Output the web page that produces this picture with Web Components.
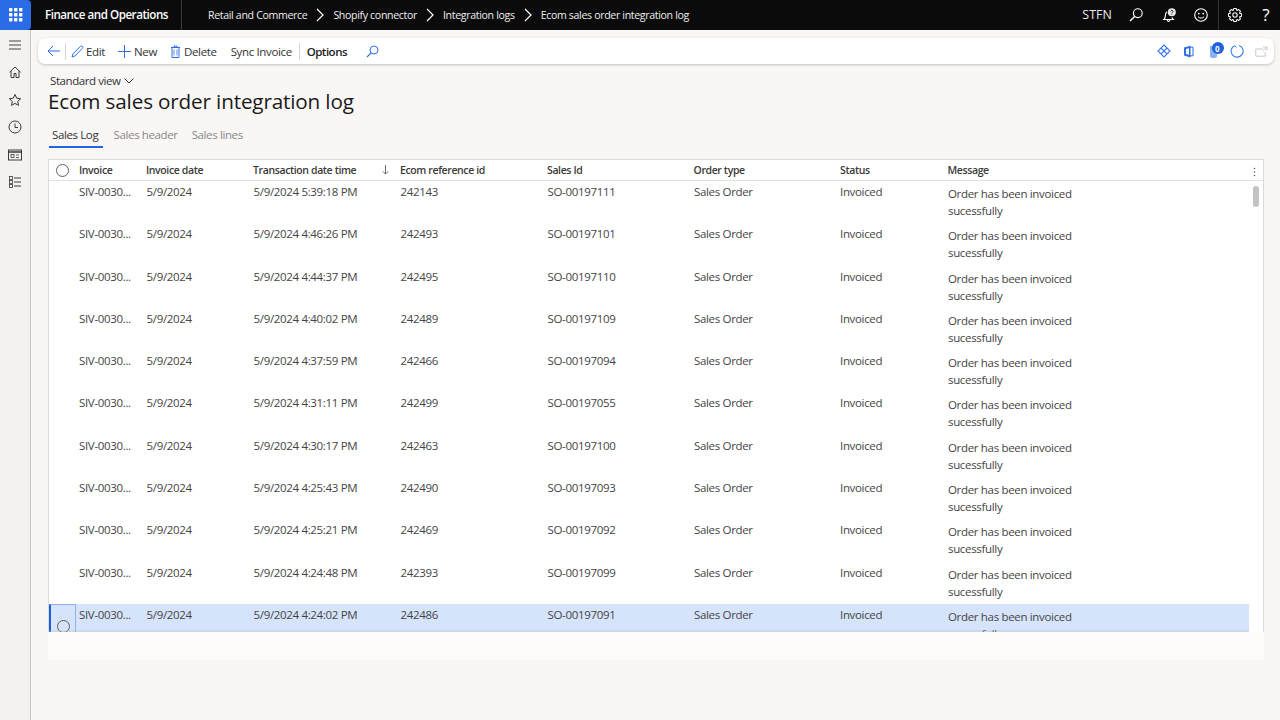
<!DOCTYPE html>
<html lang="en"><head><meta charset="utf-8"><title>Ecom sales order integration log</title>
<style>
html,body{margin:0;height:100%;overflow:hidden;background:#f8f7f5;font-family:"Open Sans","Noto Sans",sans-serif;}
body{display:flex;flex-direction:column;width:1280px;height:720px}
</style></head><body>
<fo-topbar></fo-topbar>
<fo-shell>
  <fo-rail slot="rail"></fo-rail>
  <fo-actions></fo-actions>
  <fo-heading view="Standard view" title-text="Ecom sales order integration log"></fo-heading>
  <fo-tabs></fo-tabs>
  <fo-grid></fo-grid>
</fo-shell>
<script>
const FONT='"Open Sans","Noto Sans",sans-serif';
function el(name,html){customElements.define(name,class extends HTMLElement{connectedCallback(){if(!this.shadowRoot){this.attachShadow({mode:'open'}).innerHTML=typeof html==='function'?html(this):html}}})}
const B='#2f6fe4';
const ic=(w,h,body,extra='')=>`<svg width="${w}" height="${h}" viewBox="0 0 ${w} ${h}" fill="none" ${extra}>${body}</svg>`;
function gear(c,ro,ri,n){let d='';for(let i=0;i<n;i++){const t=i/n*2*Math.PI,s=Math.PI/n;const p=(r,a)=>(c+r*Math.cos(a)).toFixed(2)+' '+(c+r*Math.sin(a)).toFixed(2);d+=(i?'L':'M')+p(ri,t-s*.95)+'L'+p(ro,t-s*.45)+'L'+p(ro,t+s*.45)+'L'+p(ri,t+s*.95)}return d+'z'}
const chev=ic(8,14,'<path d="M1 1l6 6-6 6" stroke="#fff" stroke-width="1.2"/>');

el('fo-topbar',`<style>
:host{display:flex;align-items:center;height:30px;background:#0b0b0b;color:#fff;flex:none;font:12px/30px ${FONT};overflow:hidden}
.w{width:31px;height:30px;background:#2a6be6;border-radius:0 4px 4px 0;display:grid;place-items:center;flex:none}
.p{font-size:11.6px;font-weight:600;margin-left:14px;width:136px;letter-spacing:-.47px;flex:none;white-space:nowrap}
.sep{width:1px;height:30px;background:#3b3b3b;flex:none}
nav{display:flex;align-items:center;margin-left:26px;font-size:10.6px;letter-spacing:-.34px;color:#eee;white-space:nowrap}
nav svg{margin:0 9px 0 9px}
.r{margin-left:auto;display:flex;align-items:center;height:30px}
.u{font-size:12.4px;letter-spacing:.1px;color:#e8e8e8;margin-right:17px}
.r svg{flex:none}
.d{width:1px;height:30px;background:#333;margin:0 9px 0 10px}
.q{font-size:17px;width:14px;margin:0 7px 0 17px;text-align:center}
</style>
<div class="w">${ic(14,14,[0,5,10].flatMap(x=>[0,5,10].map(y=>`<rect x="${x}" y="${y}" width="3.4" height="3.4" rx=".6" fill="#fff"/>`)).join(''))}</div>
<div class="p">Finance and Operations</div><div class="sep"></div>
<nav><span>Retail and Commerce</span>${chev}<span>Shopify connector</span>${chev}<span>Integration logs</span>${chev}<span>Ecom sales order integration log</span></nav>
<div class="r"><span class="u">STFN</span>
${ic(14,14,'<circle cx="8.8" cy="5.2" r="4.4" stroke="#fff" stroke-width="1.1"/><path d="M5.6 8.4L1 13" stroke="#fff" stroke-width="1.4"/>','style="margin-right:19px"')}
${ic(15,15,'<path d="M5 3.8C3.7 4.6 3.4 6 3.4 7.6c0 1.9-.7 3-1.6 3.9h9.4c-.6-.6-1-1.3-1.2-2.1M5.2 12.2c.3 1.5 2.3 1.5 2.7 0" stroke="#fff" stroke-width="1.1"/><circle cx="9.8" cy="4.2" r="4" fill="#e8e8e8"/><path d="M8.6 3.4c.2-1.4 2.4-1.4 2.4 0 0 1-1.2 1-1.2 2M9.8 6.2v.7" stroke="#111" stroke-width=".9"/>','style="margin-right:17px"')}
${ic(14,14,'<circle cx="7" cy="7" r="6.3" stroke="#fff" stroke-width="1.1"/><circle cx="4.8" cy="5.6" r=".9" fill="#fff"/><circle cx="9.2" cy="5.6" r=".9" fill="#fff"/><path d="M4 8.7c1.3 1.8 4.7 1.8 6 0" stroke="#fff" stroke-width="1"/>')}
<div class="d"></div>
${ic(14,14,'<path d="'+gear(7,6.6,5,8)+'" stroke="#fff" stroke-width="1.05" stroke-linejoin="round"/><circle cx="7" cy="7" r="2.2" stroke="#fff" stroke-width="1.05"/>')}
<span class="q">?</span></div>`);

customElements.define('fo-shell',class extends HTMLElement{constructor(){super();this.attachShadow({mode:'open'}).innerHTML=`<style>
:host{display:flex;flex:1;min-height:0}
main{flex:1;min-width:0;display:flex;flex-direction:column;padding:8px 6px 0 7px}
</style><slot name="rail"></slot><main><slot></slot></main>`}});

el('fo-rail',`<style>
:host{display:flex;flex-direction:column;align-items:center;width:30px;flex:none;background:#f3f2f1;border-right:1px solid #c8c6c4;padding-top:8px;box-sizing:content-box;gap:13.6px}
svg{display:block;flex:none}
svg:nth-of-type(2){margin-top:-.6px}
</style>
${ic(14,14,'<path d="M1 3h12M1 7h12M1 11h12" stroke="#444" stroke-width="1"/>')}
${ic(14,14,'<path d="M1.5 7.2L7 2l5.5 5.2M3 6v6.5h3v-4h2v4h3V6" stroke="#3b3a39" stroke-width="1"/>')}
${ic(14,14,'<path d="M7 1.5l1.7 3.7 4 .5-3 2.7.8 4L7 10.4l-3.5 2 .8-4-3-2.7 4-.5z" stroke="#3b3a39" stroke-width="1"/>')}
${ic(14,14,'<circle cx="7" cy="7" r="6" stroke="#3b3a39" stroke-width="1"/><path d="M7 3.5V7.5h3" stroke="#3b3a39" stroke-width="1"/>')}
${ic(14,14,'<rect x=".5" y="2" width="13" height="10" stroke="#3b3a39"/><path d="M1 4h12" stroke="#3b3a39" stroke-width="1.5"/><rect x="3" y="6.5" width="3" height="3" stroke="#3b3a39" stroke-width=".8"/><path d="M8 7h3M8 9.5h3" stroke="#3b3a39" stroke-width=".8"/>')}
${ic(14,14,'<rect x="1.5" y="1.5" width="3" height="3" stroke="#3b3a39" stroke-width=".8"/><rect x="1.5" y="5.5" width="3" height="3" stroke="#3b3a39" stroke-width=".8"/><rect x="1.5" y="9.5" width="3" height="3" stroke="#3b3a39" stroke-width=".8"/><path d="M6 3h7M6 7h7M6 11h7" stroke="#3b3a39"/>')}`);

el('fo-actions',`<style>
:host{display:flex;align-items:center;height:26px;background:#fff;border-radius:7px;box-shadow:0 1px 3px rgba(0,0,0,.22);padding:0 6px 0 9px;font:11.5px/24px ${FONT};color:#333;letter-spacing:-.35px;white-space:nowrap;flex:none}
svg{flex:none;display:block}
.d{width:1px;height:17px;background:#d8d6d4;flex:none}
.a{display:flex;align-items:center}
.l{padding-top:2px}
.o{font-weight:600;color:#222;letter-spacing:-.5px}
.s{flex:1}
.bg{position:relative;display:block;width:15px;height:16px;margin-right:6px;top:-1px}
.bg b{position:absolute;left:6px;top:1.5px;font:700 8px/9px ${FONT};color:#fff;letter-spacing:0}
</style>
${ic(13,12,'<path d="M6 1L1 6l5 5M1 6h12" stroke="'+B+'" stroke-width="1"/>')}
<div class="d" style="margin:0 5px"></div>
<div class="a" style="margin-right:13px">${ic(13,13,'<path d="M1 12l.8-3L9.5 1.3c.6-.6 1.5-.5 2 0s.6 1.4 0 2L3.9 11z" stroke="'+B+'"/>','style="margin-right:2px"')}<span class="l">Edit</span></div>
<div class="a" style="margin-right:13px">${ic(13,13,'<path d="M6.5 0v13M0 6.5h13" stroke="'+B+'"/>','style="margin-right:3px"')}<span class="l">New</span></div>
<div class="a" style="margin-right:14px">${ic(11,13,'<path d="M1 2.5h9M4 2.5V1h3v1.5M2 2.5v10h7v-10" stroke="'+B+'"/><path d="M4 4.5v6M7 4.5v6" stroke="'+B+'" stroke-width=".8"/>','style="margin-right:3px"')}<span class="l">Delete</span></div>
<div class="l" style="width:68px">Sync Invoice</div>
<div class="d" style="margin-right:7px"></div>
<div class="o l" style="width:59px">Options</div>
${ic(13,13,'<circle cx="8" cy="5" r="4" stroke="'+B+'"/><path d="M5 8l-4 4" stroke="'+B+'" stroke-width="1.1"/>')}
<div class="s"></div>
${ic(14,14,'<path d="M7 1l6 6-6 6-6-6z" stroke="#3a78e8" stroke-width="1.1"/><path d="M4 4l6 6M10 4l-6 6" stroke="#3a78e8" stroke-width="1.1"/>','style="margin-right:12px"')}
${ic(11,13,'<path d="M7.5.8L1 2.5v8l6.5 2z" fill="#2f6fe4"/><path d="M7 2.2h3v8.6H7" stroke="#2f6fe4"/><path d="M3 4v5l3 .8V3.3z" fill="#fff"/>','style="margin-right:15px"')}
<span class="bg">${ic(15,16,'<path d="M1 4h7v10c0 1-1 2-2 2H3c-1 0-2-1-2-2z" fill="#8fb2ef"/><circle cx="9" cy="6" r="6" fill="#1f62dc"/>')}<b>0</b></span>
${ic(14,14,'<path d="M4.5 1.7A6 6 0 1 0 9 1.4" stroke="#3a78e8" stroke-width="1.1"/><path d="M4.5 1.7l2 1.6" stroke="#3a78e8" stroke-width="1"/>','style="margin-right:11px"')}
${ic(13,11,'<path d="M8 3H.8v7.2h9.4V6M8 1h4v4M12 1L8 5" stroke="#c9c8c6"/>')}`);

customElements.define('fo-heading',class extends HTMLElement{connectedCallback(){const s=this.attachShadow({mode:'open'});s.innerHTML=`<style>
:host{display:block;padding:9px 0 0 10px;flex:none;color:#242424}
.v{font:11.5px/15px ${FONT};letter-spacing:-.43px;margin-left:2px;display:flex;align-items:center;gap:4px;color:#333}
h1{margin:0;font:500 20.7px/27px ${FONT};letter-spacing:-.16px;color:#1a1a1a;white-space:nowrap}
</style><div class="v"><span>${this.getAttribute('view')}</span>${ic(10,6,'<path d="M.5.5L5 5 9.5.5" stroke="#333"/>')}</div><h1>${this.getAttribute('title-text')}</h1>`}});

el('fo-tabs',`<style>
:host{display:flex;gap:8px;margin:10px 0 0 11px;font:11.5px/16px ${FONT};letter-spacing:-.38px;color:#8a8886;flex:none;height:25px}
span{padding:2px 3px 0 3px;height:21px;box-sizing:content-box}
.on{color:#333;border-bottom:2px solid #2266e3;box-sizing:border-box;height:23px;padding-right:5px;margin-right:-.7px}
</style><span class="on">Sales Log</span><span>Sales header</span><span>Sales lines</span>`);

const COLS='27px 3px 67px 107px 129px 18px 147px 146.5px 146.5px 107.5px 1fr';
el('fo-head',`<style>
:host{display:grid;grid-template-columns:${COLS};height:21px;box-sizing:border-box;align-items:center;border-bottom:1px solid #e1dfdd;font:600 10.5px/20px ${FONT};letter-spacing:-.38px;color:#3b3a39;white-space:nowrap}
i{width:11px;height:11px;border:1px solid #605e5c;border-radius:50%;margin-left:7px;display:block}
svg{display:block}
.m{position:absolute;right:7px;top:7px}
</style><i></i><span></span><span>Invoice</span><span>Invoice date</span><span>Transaction date time</span>
${ic(7,10,'<path d="M3.5 0v9M.8 6.3L3.5 9l2.7-2.7" stroke="#605e5c" stroke-width=".9"/>')}
<span>Ecom reference id</span><span>Sales Id</span><span>Order type</span><span>Status</span><span>Message</span>
${ic(3,10,'<circle cx="1.5" cy="1.5" r=".8" fill="#605e5c"/><circle cx="1.5" cy="5" r=".8" fill="#605e5c"/><circle cx="1.5" cy="8.5" r=".8" fill="#605e5c"/>','class="m"')}`);

customElements.define('fo-row',class extends HTMLElement{connectedCallback(){const a=n=>this.getAttribute(n);const sel=this.hasAttribute('selected');this.attachShadow({mode:'open'}).innerHTML=`<style>
:host{display:grid;grid-template-columns:${COLS};grid-template-rows:42.3px;height:42.3px;font:11.5px/17px ${FONT};letter-spacing:-.33px;color:#444;${sel?'background:#d6e4fb;':''}white-space:nowrap;position:relative}
span{padding-top:2px;grid-row:1}
.x{padding-left:.5px}
.msg{grid-column:11;padding-top:4px;white-space:normal;width:135px;padding-left:.5px}
.sel{display:${sel?'block':'none'};grid-column:1;grid-row:1;width:27px;height:28px;box-sizing:border-box;border:1px solid #8fb2ef;border-left:2px solid #1b5fd8;border-bottom:0;position:relative}
.sel i{position:absolute;left:5.5px;top:15px;width:11px;height:11px;border:1px solid #605e5c;border-radius:50%}
</style><div class="sel"><i></i></div><span style="grid-column:3">${a('inv')}</span><span style="grid-column:4" class="x">${a('date')}</span><span style="grid-column:5" class="x">${a('dt')}</span><span style="grid-column:7" class="x">${a('ref')}</span><span style="grid-column:8" class="x">${a('so')}</span><span style="grid-column:9" class="x">Sales Order</span><span style="grid-column:10">Invoiced</span><span class="msg">Order has been invoiced sucessfully</span>`}});

customElements.define('fo-grid',class extends HTMLElement{connectedCallback(){
const D=[['5:39:18','242143','197111'],['4:46:26','242493','197101'],['4:44:37','242495','197110'],['4:40:02','242489','197109'],['4:37:59','242466','197094'],['4:31:11','242499','197055'],['4:30:17','242463','197100'],['4:25:43','242490','197093'],['4:25:21','242469','197092'],['4:24:48','242393','197099'],['4:24:02','242486','197091']];
const rows=D.map((r,i)=>`<fo-row inv="SIV-0030..." date="5/9/2024" dt="5/9/2024 ${r[0]} PM" ref="${r[1]}" so="SO-00${r[2]}"${i==10?' selected':''}></fo-row>`).join('');
this.attachShadow({mode:'open'}).innerHTML=`<style>
:host{display:block;flex:none;margin:9px 0 0 10px;width:1216px;box-sizing:border-box;background:#fff;border:1px solid #dddbd9;border-bottom:0;height:473px;position:relative}
.b{height:451px;overflow:hidden;width:1200px;}
.t{position:absolute;right:4px;top:26px;width:6px;height:21px;border-radius:3px;background:#c4c4c4}
.f{position:absolute;left:-1px;right:-1px;top:472px;height:28px;background:#fdfcfa}
.g{position:absolute;left:0;width:1200px;top:470px;height:2px;background:rgba(190,190,200,.3)}
</style><fo-head></fo-head><div class="b">${rows}</div><div class="g"></div><div class="t"></div><div class="f"></div>`}});
</script>
</body></html>
